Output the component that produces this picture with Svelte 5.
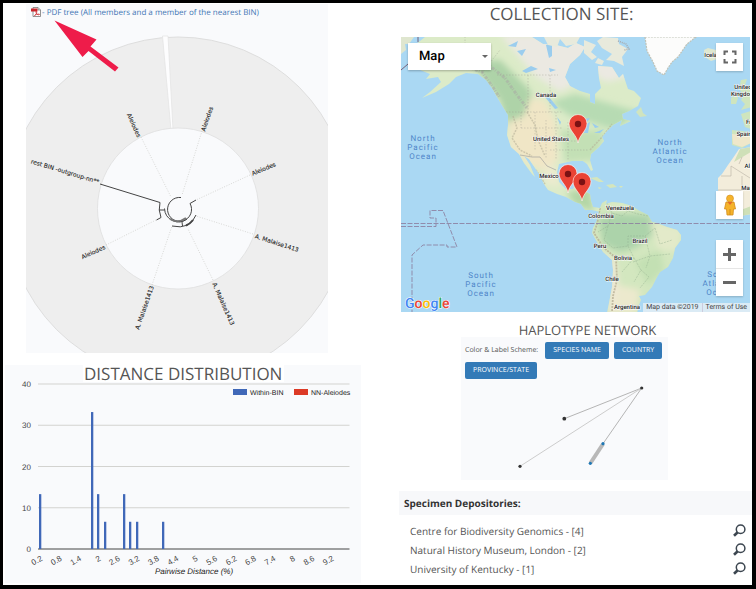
<script>
  const bars = [
    { x: 40, v: 13.3 }, { x: 92, v: 33.2 }, { x: 98, v: 13.3 }, { x: 105, v: 6.6 },
    { x: 124, v: 13.3 }, { x: 130, v: 6.6 }, { x: 137, v: 6.6 }, { x: 163, v: 6.6 }
  ];
  const yTicks = [40, 30, 20, 10, 0];
  const xTicks = ['0.2', '0.8', '1.4', '2', '2.6', '3.2', '3.8', '4.4', '5', '5.6', '6.2', '6.8', '7.4', '8', '8.6', '9.2'];
  const yOf = (v) => 549 - v * 4.125;

  const taxa = [
    { t: 'Aleiodes', x: 139, y: 137, r: 66, a: 'end' },
    { t: 'Aleiodes', x: 203, y: 131, r: -71, a: 'start' },
    { t: 'Aleiodes', x: 252, y: 174, r: -23, a: 'start' },
    { t: 'A. Malaise1413', x: 255, y: 236, r: 18, a: 'start' },
    { t: 'A. Malaise1413', x: 214, y: 283, r: 66, a: 'start' },
    { t: 'A. Malaise1413', x: 152, y: 286, r: -71, a: 'end' },
    { t: 'Aleiodes', x: 105, y: 247, r: -24, a: 'end' },
    { t: 'rest BIN -outgroup-nn**', x: 99, y: 182, r: 17, a: 'end' }
  ];

  const places = [
    { t: 'Canada', x: 546, y: 97 }, { t: 'United States', x: 551, y: 141 }, { t: 'Mexico', x: 549, y: 178 },
    { t: 'Venezuela', x: 620, y: 210 }, { t: 'Colombia', x: 601, y: 218 }, { t: 'Brazil', x: 640, y: 243 },
    { t: 'Peru', x: 600, y: 248 }, { t: 'Bolivia', x: 623, y: 260 }, { t: 'Chile', x: 612, y: 281 },
    { t: 'Argentina', x: 627, y: 309 }, { t: 'Iceland', x: 714, y: 57 }, { t: 'United', x: 743, y: 89 },
    { t: 'Kingdom', x: 743, y: 96 }, { t: 'France', x: 755, y: 124 }, { t: 'Spain', x: 744, y: 136 },
    { t: 'Algeria', x: 754, y: 168 }, { t: 'Mali', x: 747, y: 190 }
  ];
  const oceans = [
    { lines: ['North', 'Pacific', 'Ocean'], x: 423, y: 141 },
    { lines: ['North', 'Atlantic', 'Ocean'], x: 670, y: 145 },
    { lines: ['South', 'Pacific', 'Ocean'], x: 481, y: 278 },
    { lines: ['South', 'Atlantic', 'Ocean'], x: 720, y: 277 }
  ];
  const pins = [[578, 143], [568, 193], [582, 201]];

  const depositories = [
    { name: 'Centre for Biodiversity Genomics', n: 4 },
    { name: 'Natural History Museum, London', n: 2 },
    { name: 'University of Kentucky', n: 1 }
  ];
</script>

<main>
  <div class="col">
    <section class="tree">
      <a class="pdf" href="#tree">
        <svg width="10" height="10" viewBox="0 0 20 20" aria-hidden="true">
          <path d="M4 1h10l5 5v13H4z" fill="#fff" stroke="#777" stroke-width="1.6" />
          <path d="M14 1v5h5" fill="#ddd" stroke="#777" stroke-width="1.4" />
          <path d="M0 3h13v6H0z" fill="#c8262c" />
          <path d="M7 17c4-3 5-6 4-8s-2 1 0 4 5 3 6 2-4-2-10 2z" fill="none" stroke="#c8262c" stroke-width="1.5" />
        </svg>
        <span>- PDF tree (All members and a member of the nearest BIN)</span>
      </a>
      <svg class="fill" viewBox="26 20 302 333" role="img" aria-label="Circular tree">
        <circle cx="178" cy="208.5" r="171.5" fill="#eeeeee" stroke="#dedede" />
        <path d="M162.5 36 171 130H173L168 36z" fill="#fdfdfe" stroke="#e2e2e2" stroke-width=".7" />
        <circle cx="178" cy="208.5" r="80.5" fill="#f9fafc" stroke="#dedede" stroke-width=".8" />
        <g stroke="#c9c9c4" stroke-width=".7" stroke-dasharray="1 1.5">
          <path d="M141 137 171 197M202 131 182 195M250 175 196 200M253 234 196 216M213 280 188 229M152 285 172 226M106 245 158 219" />
        </g>
        <g fill="none" stroke="#444" stroke-width="1">
          <path d="M100 184 160 202.5Q158 210 161 217.5L156.500 220M159 210H164.500" />
          <path d="M181 197.500A12 12 0 1 0 190 203.500L196 200" />
          <path d="M164.500 208.500A14 14 0 0 0 187 219" />
          <path d="M170 219Q178 224 186 218" stroke-width="2" stroke="#777" />
          <path d="M182 222 182.500 226M172 226Q190 230 196 215" />
          <path d="M186 225.500Q190 224 193 220" stroke-width="2" />
        </g>
        {#each taxa as l}
          <text class="taxon" text-anchor={l.a} dy="2" transform="translate({l.x} {l.y}) rotate({l.r})">{l.t}</text>
        {/each}
        <path d="M54.500 20.500 96.500 39.500 90.500 46.500 118.500 67.500 115 71.500 88.500 51 82.500 57z" fill="#ee1c4a" />
      </svg>
    </section>

    <section class="chart">
      <h2>DISTANCE DISTRIBUTION</h2>
      <svg class="fill" viewBox="5 382 356 201" role="img" aria-label="Pairwise distance histogram">
        {#each yTicks as t}
          <path d="M38 {yOf(t)}H349.500" stroke={t ? '#d3d3d0' : '#444'} />
          <text class="tick" x="31" y={yOf(t) + 3} text-anchor="end">{t}</text>
        {/each}
        {#each bars as b}
          <rect x={b.x - 1} y={yOf(b.v)} width="2.300" height={b.v * 4.125} fill="#4068b8" />
        {/each}
        {#each xTicks as t, i}
          <text class="tick" text-anchor="end" transform="translate({43 + i * 19.43} 560) rotate(-30)">{t}</text>
        {/each}
        <rect x="233" y="389" width="14" height="6" fill="#4068b8" />
        <rect x="294" y="389" width="14" height="6" fill="#dc3a26" />
        <text class="key" x="250" y="395">Within-BIN</text>
        <text class="key" x="311" y="395">NN-Aleiodes</text>
        <text class="tick axis" x="194" y="574" text-anchor="middle">Pairwise Distance (%)</text>
      </svg>
    </section>
  </div>

  <div class="col">
    <h2 class="site">COLLECTION SITE:</h2>
    <section class="map">
      <svg class="fill" viewBox="401 37 349 275" role="img" aria-label="Map of collection sites">
        <defs>
          <clipPath id="na"><path id="naShape" d="M425 37 415 45 411 58 420 70 430 74 426 79 438 77 441 82 430 92 422 98 436 92 449 84 456 77 466 73 478 74 486 80 492 88 497 97 503 107 508 115 508 125 507 135 511 147 519 154 524 163 532 174 535 177 530 165 524 156 529 159 539 174 544 184 548 190 557 194 566 197 575 202 581 204 585 210 592 210 600 212 600 208 593 207 591 201 590 194 583 190 585 182 577 182 573 189 566 189 559 182 557 172 559 164 572 161 583 161 587 164 591 171 593 170 590 160 591 154 599 147 604 141 602 137 607 131 613 125 622 120 620 126 631 121 623 119 622 114 629 111 638 106 641 98 634 91 628 89 623 74 619 78 612 67 598 66 599 78 601 88 595 94 595 104 590 102 590 94 580 91 570 86 565 77 570 64 580 55 585 47 576 43 568 48 556 45 543 44 532 37z" /></clipPath>
          <clipPath id="sa"><path id="saShape" d="M599 210 602 203 607 200 606 204 612 202 622 203 632 206 638 210 648 215 652 222 657 223 667 227 677 230 681 235 681 240 675 248 673 258 668 267 660 272 657 277 652 287 645 295 639 296 641 300 639 305 637 313H607L609 303 612 287 613 270 612 260 603 252 597 242 592 233 593 228 596 222 598 217z" /></clipPath>
          <filter id="soft"><feGaussianBlur stdDeviation="3" /></filter>
        </defs>
        <rect x="401" y="37" width="349" height="275" fill="#aad8f3" />
        <use href="#naShape" fill="#dcebc8" />
        <g clip-path="url(#na)">
          <g filter="url(#soft)">
            <path d="M500 35H640V80L600 70 560 92 535 76 515 52z" fill="#ebe9e2" />
            <path d="M470 62 500 60 530 90 536 122 522 124 508 128 500 100z" fill="#aed3a8" />
            <path d="M550 102 575 94 640 112 615 130 570 116z" fill="#b7dbb3" />
            <path d="M508 122 524 116 530 98 545 100 556 122 558 160 545 172 530 165 510 150z" fill="#f0e6c6" />
            <path d="M560 130 605 130 598 160 565 162z" fill="#c3e0b5" />
            <path d="M545 165 556 166 560 187 545 184z" fill="#ecebcf" />
            <path d="M566 192 590 188 594 212 575 205z" fill="#b3d6a6" />
            <path d="M592 60 624 60 624 78 608 82 598 78z" fill="#ebe9e2" />
          </g>
          <path d="M425 60 440 66 452 60 468 67 482 72 492 86 500 98M490 66 505 78 517 95 527 108" fill="none" stroke="#a9a9a4" stroke-width="3" stroke-dasharray="1 1.500 3 1" opacity=".55" />
          <path d="M513 116 517 128 512 138 520 150 532 156M527 112 535 125 538 140 545 156M590 150 603 136 612 124M536 170 545 184" fill="none" stroke="#b3ad96" stroke-width="1.500" stroke-dasharray="2 1" opacity=".55" />
          <path d="M517 51 526 49 522 56zM522 71 531 66 538 69 526 73zM544 96 549 97 558 108 555 109zM508 46 518 41 516 47zM549 68 556 70 550 72zM546 45 552 43 552 56 549 58zM557 117 561 122 560 125zM579 120 590 118 587 122zM586 124 590 122 588 133 584 133zM592 123 599 127 595 128zM594 133 604 129 600 133z" fill="#9bcdee" />
          <path d="M465 62V37M482 73 500 50M497 75H558M528 75V112M550 75V112M500 112H563M521 112V128M535 112V150M546 120V158M556 112V160M521 128H562M535 141H576M550 150H588M568 122V160" fill="none" stroke="#9c9c94" stroke-width=".6" stroke-dasharray="1.500 1.500" opacity=".65" />
          <path d="M520 155 532 157 540 157 547 166 556 170" fill="none" stroke="#999" stroke-width=".6" />
        </g>
        <path d="M544 37 548 45 557 47 560 39 566 46 576 44 580 37zM584 40 596 45 591 52 597 57 592 60 584 53zM603 37 618 38 619 44 628 49 622 57 624 66 614 61 606 60 612 54 602 48 597 41zM598 58 604 61 602 65 595 63z" fill="#e8eadc" />
        <path d="M618 41 626 44 629 49 624 50" fill="none" stroke="#aaa" stroke-width="1.500" stroke-dasharray="1 1" />
        <path d="M401 37H414L409 44 405 44 406 50 401 54z" fill="#dfe6cf" />
        <path d="M418 37V42M401 70 408 64" stroke="#75607a" />
        <path d="M645 37 647 51 653 62 657 71 664 75 668 68 672 62 678 57 687 44 696 37z" fill="#fcfcfb" stroke="#bfc3b8" stroke-width="1.200" stroke-dasharray="2 1" />
        <path d="M636 112 641 107 643 113 647 116 640 117z" fill="#d0e4bf" />
        <path d="M704 50 708 48 720 51 720 58 711 61 705 57z" fill="#dfe8d0" />
        <path d="M731 104 731 98 736 94 738 98 736 104zM741 80 747 79 745 85 752 89V107L741 110 745 104 741 100 744 95 739 89zM741 114 751 111V129L745 127zM732 130 751 132V143L742 148 732 145z" fill="#cfe5be" />
        <path d="M732 134 751 136V143L742 147 733 144z" fill="#efe7ca" />
        <path d="M751 147 739 149 733 158 728 165 722 174 718 178 718 190 722 200 731 212 740 216 751 214z" fill="#f3eddb" />
        <path d="M740 149 751 147V152L734 162zM738 211 751 206V214L741 216z" fill="#cfe0b8" />
        <path d="M721 176H731V166M731 166 750 178M718 190H742V176M742 157 739 164" fill="none" stroke="#b8b2a5" stroke-width=".6" />
        <path d="M590 178 597 177 604 182 599 182zM606 185 613 184 617 187 610 188zM619 186 623 186 621 188zM598 187 602 188 599 189z" fill="#d5e6bd" />
        <use href="#saShape" fill="#d3e7bf" />
        <g clip-path="url(#sa)">
          <g filter="url(#soft)">
            <path d="M598 217 615 213 650 215 656 232 635 248 620 252 603 244z" fill="#acd3aa" />
            <path d="M650 222 683 228 678 252 658 250z" fill="#e3eac9" />
            <path d="M590 225 600 250 616 262 618 282 614 314H608L611 270 598 250z" fill="#f2e8d6" />
            <path d="M605 202 628 203 630 211 612 212z" fill="#dcebc6" />
            <path d="M618 285 640 290 636 314H612z" fill="#ece9cd" />
            <path d="M635 262 660 250 664 270 648 285z" fill="#c3e0b3" />
          </g>
          <path d="M600 208 597 224 594 233 603 247 616 258 617 280 613 296 612 312" fill="none" stroke="#b2a98e" stroke-width="1.800" stroke-dasharray="2 1" opacity=".7" />
          <path d="M607 203 612 213 622 216 628 211 638 214 648 216M612 213 608 226 598 232M608 226 604 240 613 248 628 246 634 258 622 272M634 258 641 270 634 282M641 270 649 277 640 288M628 246V236H645L655 228M645 236 650 256 670 254M655 228 660 244 672 240M633 262 650 256 646 268" fill="none" stroke="#8fa98c" stroke-width=".5" stroke-dasharray="2 1" opacity=".8" />
        </g>
        <path d="M401 226.500H436V218H430V210.500H443L457 247H447V245H423L412 255V312M401 223.500H750" fill="none" stroke="#8c7f9f" stroke-width="1" stroke-dasharray="5 1.500" opacity=".85" />
        {#each oceans as o}
          {#each o.lines as line, i}
            <text class="ocean" x={o.x} y={o.y + i * 9} text-anchor="middle">{line}</text>
          {/each}
        {/each}
        {#each places as p}
          <text class="place" x={p.x} y={p.y} text-anchor="middle">{p.t}</text>
        {/each}
        {#each pins as [x, y]}
          <g transform="translate({x} {y})">
            <path d="M0 0C-1-8-9-12-9-19.500A9 9 0 0 1 9-19.500C9-12 1-8 0 0z" fill="#ea4335" stroke="#fff" stroke-width=".6" />
            <circle cy="-19" r="3.200" fill="#7b1113" />
          </g>
        {/each}
        <text class="google" x="405" y="308"><tspan fill="#4285f4">G</tspan><tspan fill="#ea4335">o</tspan><tspan fill="#fbbc05">o</tspan><tspan fill="#4285f4">g</tspan><tspan fill="#34a853">l</tspan><tspan fill="#ea4335">e</tspan></text>
      </svg>
      <div class="type">
        <select aria-label="Map type"><option>Map</option></select>
        <svg width="6" height="3" viewBox="0 0 6 3" aria-hidden="true"><path d="M0 0H6L3 3z" fill="#666" /></svg>
      </div>
      <button class="ctl full" aria-label="Full screen">
        <svg width="14" height="14" viewBox="0 0 14 14"><path d="M1.500 5V1.500H5M9 1.500H12.500V5M12.500 9V12.500H9M5 12.500H1.500V9" fill="none" stroke="#666" stroke-width="2" /></svg>
      </button>
      <div class="stack">
        <button class="ctl" aria-label="Street View">
          <svg width="12" height="22" viewBox="0 0 12 22"><path d="M2 8H10L11.500 15H9.500L9 21H3L2.500 15H.5z" fill="#f5b32b" stroke="#d28d1c" stroke-width=".8" /><circle cx="6" cy="4.500" r="3.500" fill="#f5b32b" stroke="#d28d1c" stroke-width=".6" /><path d="M3.500 8H8.500L6 11z" fill="#e3692b" /><path d="M6 15V21" stroke="#d28d1c" /></svg>
        </button>
        <div class="zoom">
          <button class="ctl" aria-label="Zoom in"><svg width="13" height="13" viewBox="0 0 13 13"><path d="M6.500 0V13M0 6.500H13" stroke="#666" stroke-width="3" /></svg></button>
          <button class="ctl" aria-label="Zoom out"><svg width="13" height="13" viewBox="0 0 13 13"><path d="M0 6.500H13" stroke="#666" stroke-width="3" /></svg></button>
        </div>
      </div>
      <div class="credit"><span>Map data ©2019</span><a href="#terms">Terms of Use</a></div>
    </section>

    <section class="haplo">
      <h3>HAPLOTYPE NETWORK</h3>
      <div class="panel">
        <div class="scheme">
          <span>Color &amp; Label Scheme:</span>
          <button>SPECIES NAME</button>
          <button>COUNTRY</button>
          <button>PROVINCE/STATE</button>
        </div>
        <svg class="fill" viewBox="461 379 207 101" role="img" aria-label="Haplotype network">
          <path d="M564.300 418.700 641.700 388 603 443.700" fill="none" stroke="#b5b5b5" />
          <path d="M641.700 388 520 466.300" stroke="#cdcdcd" />
          <path d="M603 444 590.500 463" stroke="#b8b8b8" stroke-width="4" />
          <circle cx="641.700" cy="388" r="1.600" fill="#333" />
          <circle cx="564.300" cy="418.700" r="1.900" fill="#333" />
          <circle cx="520" cy="466.300" r="1.600" fill="#333" />
          <circle cx="603" cy="443.700" r="1.600" fill="#1f77b4" />
          <circle cx="590.300" cy="463.300" r="1.600" fill="#1f77b4" />
        </svg>
      </div>
    </section>

    <section class="deps">
      <h4>Specimen Depositories:</h4>
      <ul>
        {#each depositories as d}
          <li>
            <span>{d.name} - [{d.n}]</span>
            <button aria-label="Search {d.name}">
              <svg width="13" height="13" viewBox="0 0 13 13"><circle cx="7.600" cy="5.200" r="4.300" fill="none" stroke="#3c4650" stroke-width="1.500" /><path d="M4.700 8.300 1 11.800" stroke="#3c4650" stroke-width="2.600" /></svg>
            </button>
          </li>
        {/each}
      </ul>
    </section>
  </div>
</main>

<style>
  :global(body) { margin: 0; background: #fff; }
  main {
    box-sizing: border-box;
    min-height: 100vh;
    border: 3px solid #000;
    border-right-width: 4px;
    border-bottom-width: 4px;
    padding-top: 1px;
    display: grid;
    grid-template-columns: 358fr 353fr;
    column-gap: 38px;
    font-family: "Open Sans", "Noto Sans", sans-serif;
    text-rendering: geometricPrecision;
    color: #555;
    align-items: start;
  }
  .col { display: flex; flex-direction: column; min-width: 0; }
  h2, h3, h4, ul { margin: 0; padding: 0; font-weight: 400; }
  button { border: 0; padding: 0; font: inherit; text-rendering: inherit; color: inherit; cursor: pointer; }
  .fill { display: block; width: 100%; height: auto; }

  .tree { margin: 0 33px 0 23px; background: #f9fafc; }
  .pdf {
    display: flex; align-items: center; gap: 1px;
    height: 16px; padding-left: 5px;
    font-size: 8px; color: #3f76b4; text-decoration: none; white-space: nowrap;
  }
  .taxon { font: 6px "DejaVu Sans", sans-serif; fill: #222; stroke: #222; stroke-width: .1px; }

  .chart { margin: 12px 0 0 2px; background: #f9fafc; }
  .chart .fill { overflow: visible; }
  h2 { font-size: 17px; line-height: 17px; }
  .chart h2 { width: max-content; margin-left: 78px; padding: 0 2px 0 1px; background: #fff; }
  .tick { font: 8px "Liberation Sans", sans-serif; fill: #444; }
  .axis { font-style: italic; fill: #222; }
  .key { font: 7px "Liberation Sans", sans-serif; fill: #222; }

  .site { line-height: 20px; text-align: center; margin-right: 28px; }
  .map { position: relative; overflow: hidden; margin: 13px 2px 0; font-family: Roboto, sans-serif; }
  .place { font: 500 6px Roboto, sans-serif; fill: #222; stroke: #fff; stroke-width: 1px; paint-order: stroke; }
  .ocean { font: 8px Roboto, sans-serif; fill: #4f86c9; letter-spacing: 1px; }
  .google { font: 500 14px Roboto, sans-serif; stroke: #fff; stroke-width: 1px; paint-order: stroke; }
  .type {
    position: absolute; top: 6px; left: 7px; display: flex; align-items: center;
    box-sizing: border-box; width: 83px; height: 27px; background: #fff; padding-right: 3px;
    box-shadow: 0 1px 2px #0004;
  }
  .type select {
    appearance: none; flex: 1; min-width: 0; height: 100%; border: 0; background: transparent;
    padding: 0 0 0 11px; font: 500 13px Roboto, sans-serif; color: #000; text-rendering: inherit;
  }
  .ctl { width: 27px; height: 28px; background: #fff; display: grid; place-items: center; box-shadow: 0 1px 2px #0003; }
  .full { position: absolute; top: 6px; right: 7px; }
  .stack { position: absolute; right: 7px; bottom: 16px; display: flex; flex-direction: column; gap: 21px; }
  .zoom { background: #fff; box-shadow: 0 1px 2px #0003; }
  .zoom .ctl { box-shadow: none; }
  .zoom .ctl + .ctl { box-shadow: inset 0 1px #e6e6e6; }
  .credit {
    position: absolute; right: 0; bottom: 0; display: flex; height: 9px; line-height: 9px;
    background: #e4eef4d9; font-size: 7px; color: #444;
  }
  .credit span, .credit a { padding: 0 3px; color: inherit; text-decoration: none; }
  .credit a { border-left: 1px solid #ccd; }

  .haplo { margin: 11px 84px 0 62px; }
  h3 { font-size: 13px; line-height: 14px; text-align: center; margin-left: 46px; white-space: nowrap; }
  .panel { background: #f9fafc; }
  .scheme { display: flex; flex-wrap: wrap; align-items: center; gap: 3px 5px; padding: 5px 4px 0; font-size: 7px; }
  .scheme span { padding-right: 2px; }
  .scheme button {
    background: #337ab7; color: #fff; height: 17px; padding: 0 8px; border-radius: 2px; line-height: 17px;
  }

  .deps { margin-top: 11px; }
  h4 { font-size: 10px; font-weight: 700; line-height: 24px; padding-left: 5px; background: #f7f8fa; color: #333; }
  ul { list-style: none; padding: 6px 6px 0 11px; }
  li { display: flex; justify-content: space-between; align-items: center; height: 19px; font-size: 10px; }
  li button { display: grid; background: none; }
</style>
